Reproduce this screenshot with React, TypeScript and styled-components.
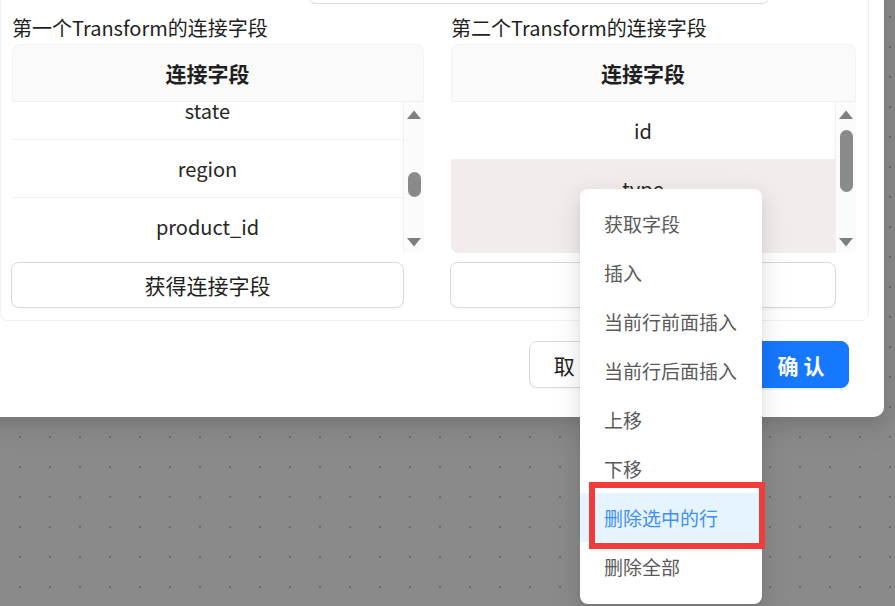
import styled, { createGlobalStyle } from "styled-components";

const GlobalStyle = createGlobalStyle`
  html, body {
    margin: 0;
    padding: 0;
    width: 100%;
    height: 100%;
    overflow: hidden;
  }
  body {
    font-family: "Noto Sans CJK SC", "Noto Sans", sans-serif;
    background-color: #8a8a8a;
    background-image: radial-gradient(circle, #6c6c6c 1px, transparent 1.6px);
    background-size: 30px 30px;
    background-position: 5px 2px;
  }
  * {
    box-sizing: border-box;
  }
`;

const Stage = styled.div`
  position: relative;
  width: 895px;
  height: 606px;
  overflow: hidden;
`;

const Modal = styled.div`
  position: absolute;
  left: -16px;
  top: -64px;
  width: 900px;
  background: #fff;
  border-radius: 10px;
  padding: 16px 15px 29px 16px;
  box-shadow: 0 6px 16px rgba(0, 0, 0, 0.1), 0 9px 28px 8px rgba(0, 0, 0, 0.05);
`;

const Card = styled.div`
  border: 1px solid #f0f0f0;
  border-radius: 8px;
  padding: 12px 12px 12px 11px;
`;

const SelectBox = styled.div`
  margin-left: 296px;
  width: 462px;
  height: 39px;
  border: 1px solid #d9d9d9;
  border-radius: 8px;
`;

const Columns = styled.div`
  display: grid;
  grid-template-columns: 412px 405px;
  column-gap: 27px;
  margin-top: 12px;
`;

const Column = styled.div`
  display: flex;
  flex-direction: column;
`;

const Label = styled.div`
  font-size: 20px;
  line-height: 24px;
  color: #1f1f1f;
  white-space: nowrap;
`;

const Table = styled.div`
  margin-top: 4px;
  border-radius: 8px;
  overflow: hidden;
`;

const Header = styled.div`
  height: 58px;
  display: flex;
  align-items: center;
  justify-content: center;
  padding-right: 21px;
  background: #fafafa;
  border: 1px solid #f2f2f2;
  border-bottom-color: #f0f0f0;
  border-radius: 8px 8px 0 0;
  font-size: 21px;
  font-weight: 700;
  color: #1f1f1f;
`;

const Body = styled.div`
  display: flex;
  height: 151px;
`;

const Rows = styled.div<{ $offset: number }>`
  flex: 1;
  overflow: hidden;
  & > div:first-child {
    margin-top: ${(p) => -p.$offset}px;
  }
`;

const Row = styled.div<{ $active?: boolean }>`
  height: 58px;
  display: flex;
  align-items: center;
  justify-content: center;
  border-bottom: 1px solid ${(p) => (p.$active ? "#f2ecec" : "#f0f0f0")};
  background: ${(p) => (p.$active ? "#f2ecec" : "#fff")};
  font-size: 20px;
  color: #262626;
`;

const Scrollbar = styled.div`
  width: 21px;
  display: flex;
  flex-direction: column;
  align-items: center;
  padding: 8px 0 6px;
  background: #fbfbfb;
  border-left: 1px solid #f0f0f0;
`;

const Track = styled.div`
  flex: 1;
  width: 100%;
  display: flex;
  justify-content: center;
`;

const Thumb = styled.div<{ $top: number; $height: number }>`
  width: 13px;
  height: ${(p) => p.$height}px;
  margin-top: ${(p) => p.$top}px;
  border-radius: 7px;
  background: #8a8a8a;
`;

const ActionButton = styled.button`
  margin-top: 9px;
  margin-left: -1px;
  width: calc(100% - 19px);
  height: 46px;
  border: 1px solid #d9d9d9;
  border-radius: 8px;
  background: #fff;
  font-family: inherit;
  font-size: 21px;
  color: #1f1f1f;
  box-shadow: 0 2px 0 rgba(0, 0, 0, 0.02);
`;

const Footer = styled.div`
  display: flex;
  justify-content: flex-end;
  gap: 128px;
  margin-top: 20px;
  padding-right: 20px;
`;

const FooterButton = styled.button<{ $primary?: boolean }>`
  width: 96px;
  height: 47px;
  border-radius: 8px;
  font-family: inherit;
  font-size: 21px;
  font-weight: ${(p) => (p.$primary ? 700 : 400)};
  color: ${(p) => (p.$primary ? "#fff" : "#1f1f1f")};
  background: ${(p) => (p.$primary ? "#1677ff" : "#fff")};
  border: 1px solid ${(p) => (p.$primary ? "#1677ff" : "#d9d9d9")};
  box-shadow: ${(p) =>
    p.$primary ? "0 2px 0 rgba(5, 145, 255, 0.1)" : "0 2px 0 rgba(0, 0, 0, 0.02)"};
`;

const Menu = styled.div`
  position: absolute;
  left: 580px;
  top: 189px;
  width: 182px;
  padding: 10px 0 13px;
  background: #fff;
  border-radius: 8px;
  box-shadow: 0 6px 16px rgba(0, 0, 0, 0.08), 0 3px 6px -4px rgba(0, 0, 0, 0.12),
    0 9px 28px 8px rgba(0, 0, 0, 0.05);
`;

const MenuItem = styled.div<{ $active?: boolean }>`
  position: relative;
  height: 49px;
  display: flex;
  align-items: center;
  padding-left: 24px;
  font-size: 19px;
  color: ${(p) => (p.$active ? "#3f8ff7" : "#5a5a5a")};
  background: ${(p) => (p.$active ? "#e6f4ff" : "transparent")};
  white-space: nowrap;
`;

const Highlight = styled.div`
  position: absolute;
  top: -11px;
  left: 9px;
  right: -3px;
  bottom: -7px;
  border: 6px solid #f23c3c;
`;

const Arrow = ({ down }: { down?: boolean }) => (
  <svg width="14" height="10" viewBox="0 0 14 10">
    <polygon points={down ? "0,1 14,1 7,9.5" : "0,9 14,9 7,0.5"} fill="#7f7f7f" />
  </svg>
);

const FakeScrollbar = ({ top, height }: { top: number; height: number }) => (
  <Scrollbar>
    <Arrow />
    <Track>
      <Thumb $top={top} $height={height} />
    </Track>
    <Arrow down />
  </Scrollbar>
);

const menuItems = [
  "获取字段",
  "插入",
  "当前行前面插入",
  "当前行后面插入",
  "上移",
  "下移",
  "删除选中的行",
  "删除全部",
];

export default function App() {
  return (
    <>
      <GlobalStyle />
      <Stage>
        <Modal>
          <Card>
            <SelectBox />
            <Columns>
              <Column>
                <Label>第一个Transform的连接字段</Label>
                <Table>
                  <Header>连接字段</Header>
                  <Body>
                    <Rows $offset={20}>
                      <Row>state</Row>
                      <Row>region</Row>
                      <Row>product_id</Row>
                    </Rows>
                    <FakeScrollbar top={52} height={25} />
                  </Body>
                </Table>
                <ActionButton>获得连接字段</ActionButton>
              </Column>
              <Column>
                <Label>第二个Transform的连接字段</Label>
                <Table>
                  <Header>连接字段</Header>
                  <Body>
                    <Rows $offset={0}>
                      <Row>id</Row>
                      <Row $active>type</Row>
                      <Row $active />
                    </Rows>
                    <FakeScrollbar top={10} height={62} />
                  </Body>
                </Table>
                <ActionButton>获得连接字段</ActionButton>
              </Column>
            </Columns>
          </Card>
          <Footer>
            <FooterButton>取 消</FooterButton>
            <FooterButton $primary>确 认</FooterButton>
          </Footer>
        </Modal>
        <Menu>
          {menuItems.map((item) => (
            <MenuItem key={item} $active={item === "删除选中的行"}>
              {item}
              {item === "删除选中的行" && <Highlight />}
            </MenuItem>
          ))}
        </Menu>
      </Stage>
    </>
  );
}
